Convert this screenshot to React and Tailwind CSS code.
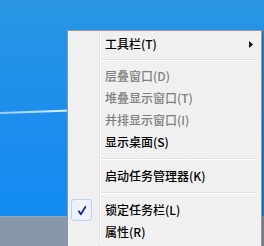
import React from "react";

const font = { fontFamily: '"Noto Sans CJK SC", "Noto Sans", sans-serif' };

function Row({ label, disabled, arrow, checked }) {
  return (
    <div className="flex h-[22px] items-stretch">
      <div className="w-[32px] shrink-0 border-r border-[#e2e3e3] flex items-center pl-[3px]">
        {checked && (
          <div className="w-[21px] h-[22px] rounded-[3px] border border-[#bcd3ee] bg-[#eef3fa] flex items-center justify-center">
            <svg width="10" height="11" viewBox="0 0 10 11">
              <path d="M1.5 5.8 L3.9 9.2 L8.8 1.2" fill="none" stroke="#1d2b8e" strokeWidth="1.8" strokeLinejoin="round" />
            </svg>
          </div>
        )}
      </div>
      <div className="flex-1 flex items-center justify-between border-l border-white pl-[4px] pr-[8px]">
        <span className={`text-[12px] leading-none font-medium ${disabled ? "text-[#808080]" : "text-[#000]"}`}>{label}</span>
        {arrow && (
          <svg width="4" height="7" viewBox="0 0 4 7">
            <path d="M0 0 L4 3.5 L0 7 Z" fill="#111" />
          </svg>
        )}
      </div>
    </div>
  );
}

function Sep({ h = "h-[10px]" }) {
  return (
    <div className={`flex ${h} items-stretch`}>
      <div className="w-[32px] shrink-0 border-r border-[#e2e3e3]" />
      <div className="flex-1 border-l border-white flex flex-col justify-center pr-[3px]">
        <div className="h-px bg-[#e0e0e0]" />
        <div className="h-px bg-white" />
      </div>
    </div>
  );
}

export default function App() {
  return (
    <div className="relative w-[264px] h-[246px] overflow-hidden" style={font}>
      <div className="flex flex-col h-full">
        <div className="flex-1 bg-[linear-gradient(180deg,#2a95e3_0%,#1b8ded_60%,#138bf2_100%)] flex flex-col">
          <div className="h-[112px]" />
          <div className="h-[2px] w-[72px] bg-[linear-gradient(90deg,rgba(255,255,255,0.55),rgba(235,248,255,0.95))] rounded-full -rotate-[2deg] origin-left" />
        </div>
        <div className="h-[30px] bg-[#8897a9] border-t border-[#9aa7b6]" />
      </div>

      <div className="absolute left-[67px] top-[30px] w-[195px] h-[230px] border border-[#979797] bg-[#f0f0f0] pt-[2px] shadow-[2px_2px_3px_rgba(0,0,0,0.25)]">
        <Row label="工具栏(T)" arrow />
        <Sep />
        <Row label="层叠窗口(D)" disabled />
        <Row label="堆叠显示窗口(T)" disabled />
        <Row label="并排显示窗口(I)" disabled />
        <Row label="显示桌面(S)" />
        <Sep h="h-[12px]" />
        <Row label="启动任务管理器(K)" />
        <Sep h="h-[12px]" />
        <Row label="锁定任务栏(L)" checked />
        <Row label="属性(R)" />
        <div className="flex flex-1 h-[20px]">
          <div className="w-[32px] shrink-0 border-r border-[#e2e3e3]" />
        </div>
      </div>
    </div>
  );
}
